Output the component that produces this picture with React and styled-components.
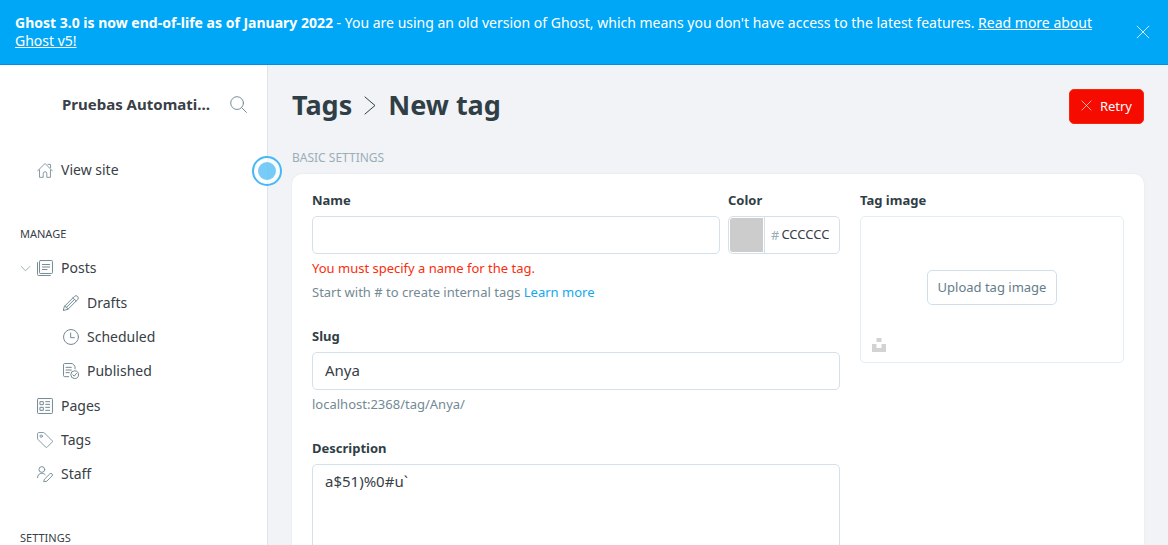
import React from "react";
import styled, { createGlobalStyle } from "styled-components";

const GlobalStyle = createGlobalStyle`
  *, *::before, *::after { box-sizing: border-box; }
  body {
    margin: 0;
    color: #394047;
    background: #f1f3f7;
    font-family: "Noto Sans", "Open Sans", sans-serif;
    font-size: 14px;
  }
  button, input, textarea { font-family: inherit; }
`;

const Shell = styled.div`
  display: flex;
  flex-direction: column;
  height: 100vh;
  overflow: hidden;
`;

const Banner = styled.aside`
  display: flex;
  align-items: center;
  justify-content: space-between;
  gap: 40px;
  flex: none;
  padding: 14px 18px 14px 15px;
  border-bottom: 1px solid #008ce8;
  background: #00a7f7;
  color: #fff;
`;

const BannerText = styled.p`
  margin: 0;
  font-size: 14px;
  line-height: 18px;
`;

const BannerLink = styled.a`
  color: inherit;
  text-decoration: underline;
`;

const IconButton = styled.button`
  display: flex;
  flex: none;
  padding: 0;
  border: 0;
  background: none;
  color: ${(p) => p.$color};
  cursor: pointer;
`;

const Body = styled.div`
  display: flex;
  flex: 1;
  min-height: 0;
`;

const Sidebar = styled.nav`
  position: relative;
  flex: none;
  width: 268px;
  border-right: 1px solid #dfe3ec;
  background: #fff;
`;

const SidebarInner = styled.div`
  height: 100%;
  overflow: hidden;
`;

const SiteHeader = styled.div`
  display: flex;
  align-items: center;
  gap: 16px;
  height: 38px;
  margin: 20px 20px 30px 62px;
`;

const SiteName = styled.div`
  flex: 1;
  min-width: 0;
  overflow: hidden;
  font-size: 15px;
  font-weight: 700;
  line-height: 20px;
  text-overflow: ellipsis;
  white-space: nowrap;
`;

const SectionTitle = styled.h4`
  margin: 38px 0 8px;
  padding: 0 20px;
  color: #394047;
  font-size: 11px;
  font-weight: 400;
  line-height: 18px;
  text-transform: uppercase;
`;

const NavList = styled.ul`
  margin: 0;
  padding: ${(p) => (p.$nested ? "1px 0" : "0")};
  list-style: none;
`;

const NavLink = styled.a`
  display: flex;
  align-items: center;
  gap: ${(p) => (p.$expandable ? "6px" : "8px")};
  height: 34px;
  padding-left: ${(p) => (p.$nested ? "63px" : p.$expandable ? "20px" : "37px")};
  color: #394047;
  font-size: 14px;
  line-height: 18px;
  text-decoration: none;
  svg { color: #738a94; }
`;

const NavText = styled.span`
  margin-left: ${(p) => (p.$expandable ? "2px" : "0")};
`;

const Beacon = styled.button`
  position: absolute;
  top: 91px;
  right: -15px;
  display: flex;
  align-items: center;
  justify-content: center;
  width: 30px;
  height: 30px;
  padding: 0;
  border: 2px solid #45b9f6;
  border-radius: 50%;
  background: rgba(255, 255, 255, 0.6);
  &::after {
    content: "";
    width: 18px;
    height: 18px;
    border-radius: 50%;
    background: rgba(62, 183, 243, 0.7);
  }
`;

const Main = styled.main`
  flex: 1;
  min-width: 0;
  padding: 24px 24px 0;
  overflow: hidden;
`;

const PageHeader = styled.header`
  display: flex;
  align-items: flex-start;
  justify-content: space-between;
`;

const PageTitle = styled.h2`
  display: flex;
  align-items: baseline;
  gap: 11px;
  margin: 0;
  color: #303e45;
  font-size: 27px;
  font-weight: 700;
  line-height: 32px;
`;

const TitleLink = styled.a`
  color: inherit;
  text-decoration: none;
`;

const Button = styled.button`
  display: flex;
  align-items: center;
  gap: 8px;
  height: 35px;
  padding: 0 ${(p) => (p.$danger ? "11px" : "10px")} 2px;
  border: 1px solid ${(p) => (p.$danger ? "#f5280c" : "#cfdfe8")};
  border-radius: 5px;
  background: ${(p) => (p.$danger ? "#f50b00" : "#fff")};
  color: ${(p) => (p.$danger ? "#fff" : "#647d89")};
  font-size: 13px;
  line-height: 18px;
  white-space: nowrap;
  cursor: pointer;
`;

const FormSection = styled.section`
  margin-top: 26px;
`;

const FormHeading = styled.h3`
  margin: 0 0 8px;
  color: #9baeb8;
  font-size: 12px;
  font-weight: 400;
  line-height: 16px;
  text-transform: uppercase;
`;

const Card = styled.div`
  display: grid;
  grid-template-columns: 2fr 1fr;
  gap: 20px;
  padding: 20px;
  border-radius: 10px;
  background: #fff;
  box-shadow: 0 0 2px rgba(0, 0, 0, 0.08);
`;

const Fields = styled.div`
  display: flex;
  flex-direction: column;
  gap: 28px;
`;

const NameRow = styled.div`
  display: grid;
  grid-template-columns: 1fr 112px;
  gap: 8px;
`;

const Label = styled.label`
  display: block;
  margin-bottom: 10px;
  color: #303e45;
  font-size: 13px;
  font-weight: 700;
  line-height: 12px;
`;

const Input = styled.input`
  display: block;
  width: 100%;
  height: 38px;
  padding: 0 12px 2px;
  border: 1px solid #d2e1eb;
  border-radius: 5px;
  outline: 0;
  background: #fff;
  color: #394047;
  font-size: 15px;
`;

const TextArea = styled.textarea`
  display: block;
  width: 100%;
  height: 108px;
  padding: 6px 12px;
  border: 1px solid #d2e1eb;
  border-radius: 5px;
  outline: 0;
  color: #394047;
  font-size: 15px;
  line-height: 20px;
  resize: none;
`;

const Note = styled.p`
  margin: 5px 0 0;
  color: ${(p) => (p.$error ? "#fa2d0c" : "#738a94")};
  font-size: 13px;
  line-height: 19px;
`;

const NoteLink = styled.a`
  color: #14a8f0;
  text-decoration: none;
`;

const ColorBox = styled.div`
  display: flex;
  align-items: center;
  height: 38px;
  padding: 1px;
  border: 1px solid #d2e1eb;
  border-radius: 5px;
`;

const Swatch = styled.input`
  flex: none;
  width: 35px;
  height: 36px;
  padding: 0;
  border: 0;
  border-right: 1px solid #d2e1eb;
  background: none;
  appearance: none;
  &::-webkit-color-swatch-wrapper { padding: 1px 1px 1px 0; }
  &::-webkit-color-swatch { border: 0; border-radius: 3px 0 0 3px; }
`;

const Hash = styled.span`
  margin-left: 6px;
  color: #9baeb8;
  font-size: 13px;
`;

const HexInput = styled.input`
  flex: 1;
  min-width: 0;
  padding: 0 0 2px 2px;
  border: 0;
  outline: 0;
  color: #394047;
  font-size: 13px;
`;

const Uploader = styled.div`
  position: relative;
  display: flex;
  align-items: center;
  justify-content: center;
  height: 147px;
  padding-bottom: 4px;
  border: 1px solid #e0eef6;
  border-radius: 5px;
`;

const UnsplashButton = styled(IconButton)`
  position: absolute;
  bottom: 10px;
  left: 11px;
`;

const Svg = ({ size = 16, weight = 1.5, children }) => (
  <svg
    width={size}
    height={size}
    viewBox="0 0 24 24"
    fill="none"
    stroke="currentColor"
    strokeWidth={weight}
    strokeLinecap="round"
    strokeLinejoin="round"
    aria-hidden="true"
  >
    {children}
  </svg>
);

const CloseIcon = ({ size }) => (
  <Svg size={size} weight={1.4}><path d="M2 2l20 20M22 2L2 22" /></Svg>
);
const SearchIcon = () => (
  <Svg size={17} weight={1.4}><circle cx="10" cy="10" r="9" /><path d="M16.5 16.5L23.2 23.2" /></Svg>
);
const HomeIcon = () => (
  <Svg weight={1.3}>
    <path d="M.8 13.5L12 2.200l11.200 11.300M3.800 12v11h5.500v-5.700a2.700 2.700 0 0 1 5.400 0V23h5.500V12M16.500 3.500h3.800v5" />
  </Svg>
);
const PostsIcon = () => (
  <Svg>
    <rect x="3.800" y=".8" width="19.400" height="19.400" rx="1.2" />
    <path d="M.8 3.800v17.900c0 1 .6 1.500 1.500 1.500H20M8 6.800h11M8 10.500h11M8 14.300h7" />
  </Svg>
);
const DraftsIcon = () => (
  <Svg>
    <path d="M2.6 16.6L17.2 2a3.4 3.4 0 0 1 4.8 4.8L7.4 21.4L.8 23.2zM15 4.2L19.8 9M2.6 16.6l1.8.6.6 1.8 1.8.6.6 1.8M17.2 6.6L5 18.8" />
  </Svg>
);
const ClockIcon = () => (
  <Svg><circle cx="12" cy="12" r="11.2" /><path d="M11.5 6v7H17" /></Svg>
);
const PublishedIcon = () => (
  <Svg>
    <path d="M8.5 20.5h-6C1.500 20.5.8 20 .8 19V2.300C.8 1.500 1.500.8 2.500.8H14l4 4v4M4.500 6.500h8M4.500 10.500h8M4.500 14.500h5" />
    <circle cx="17.500" cy="17.500" r="5.800" />
    <path d="M14.800 17.800l2 2 3.500-4.300" />
  </Svg>
);
const PagesIcon = () => (
  <Svg>
    <rect x=".8" y=".8" width="22.4" height="22.4" rx="1.2" />
    <path d="M5 5.500h4.500V10H5zM5 14h4.500v4.500H5zM13 5.500h6M13 9.500h6M13 14h6M13 18.500h6" />
  </Svg>
);
const TagIcon = () => (
  <Svg weight={1.3}>
    <path d="M.8 2.500C.8 1.500 1.500.8 2.500.8h7.200c.6 0 1 .2 1.400.6l11.700 11.700c.6.6.6 1.400 0 2l-7.700 7.700c-.6.6-1.400.6-2 0L1.400 11.100C1 10.700.8 10.300.8 9.700z" />
    <circle cx="6.300" cy="6.300" r="1.800" />
  </Svg>
);
const StaffIcon = () => (
  <Svg weight={1.4}>
    <circle cx="7.300" cy="5.200" r="4.300" />
    <path d="M.8 17.500c0-4 2.700-6.500 6.500-6.500 2 0 3.800.7 5 2M11.500 19.500l7.700-7.700a2.300 2.300 0 0 1 3.300 3.300l-7.700 7.700-4.200.9z" />
  </Svg>
);
const ExpandIcon = () => (
  <Svg size={11} weight={1.5}><path d="M2.500 7.500L12 17 21.500 7.500" /></Svg>
);
const TitleChevron = () => (
  <svg width="14" height="19" viewBox="0 0 14 19" fill="none" stroke="currentColor" aria-hidden="true">
    <path d="M2 1l10 8.500L2 18" strokeLinecap="round" strokeLinejoin="round" />
  </svg>
);
const UnsplashIcon = () => (
  <svg width="14" height="14" viewBox="0 0 14 14" fill="currentColor" aria-hidden="true">
    <path d="M4.500 0h5v4h-5zM0 6h4.500v4h5V6H14v8H0z" />
  </svg>
);

const NavItem = ({ icon: Icon, label, nested, expandable, children }) => (
  <li>
    <NavLink href="#" $nested={nested} $expandable={expandable}>
      {expandable && <ExpandIcon />}
      <Icon />
      <NavText $expandable={expandable}>{label}</NavText>
    </NavLink>
    {children}
  </li>
);

export default function App() {
  return (
    <>
      <GlobalStyle />
      <Shell>
        <Banner>
          <BannerText>
            <strong>Ghost 3.0 is now end-of-life as of January 2022</strong> - You are using an old
            version of Ghost, which means you don't have access to the latest features.{" "}
            <BannerLink href="#">Read more about Ghost v5!</BannerLink>
          </BannerText>
          <IconButton $color="#fff" aria-label="Close"><CloseIcon size={14} /></IconButton>
        </Banner>
        <Body>
          <Sidebar>
            <SidebarInner>
              <SiteHeader>
                <SiteName>Pruebas Automatizadas</SiteName>
                <IconButton $color="#738a94" aria-label="Search"><SearchIcon /></IconButton>
              </SiteHeader>
              <NavList>
                <NavItem icon={HomeIcon} label="View site" />
              </NavList>
              <SectionTitle>Manage</SectionTitle>
              <NavList>
                <NavItem icon={PostsIcon} label="Posts" expandable>
                  <NavList $nested>
                    <NavItem icon={DraftsIcon} label="Drafts" nested />
                    <NavItem icon={ClockIcon} label="Scheduled" nested />
                    <NavItem icon={PublishedIcon} label="Published" nested />
                  </NavList>
                </NavItem>
                <NavItem icon={PagesIcon} label="Pages" />
                <NavItem icon={TagIcon} label="Tags" />
                <NavItem icon={StaffIcon} label="Staff" />
              </NavList>
              <SectionTitle>Settings</SectionTitle>
            </SidebarInner>
            <Beacon aria-label="Show tip" />
          </Sidebar>
          <Main>
            <PageHeader>
              <PageTitle>
                <TitleLink href="#">Tags</TitleLink>
                <TitleChevron />
                New tag
              </PageTitle>
              <Button $danger><CloseIcon size={11} />Retry</Button>
            </PageHeader>
            <FormSection>
              <FormHeading>Basic settings</FormHeading>
              <Card>
                <Fields>
                  <div>
                    <NameRow>
                      <div>
                        <Label htmlFor="tag-name">Name</Label>
                        <Input id="tag-name" type="text" />
                      </div>
                      <div>
                        <Label htmlFor="tag-color">Color</Label>
                        <ColorBox>
                          <Swatch type="color" defaultValue="#cccccc" aria-label="Pick a color" />
                          <Hash>#</Hash>
                          <HexInput id="tag-color" type="text" defaultValue="CCCCCC" />
                        </ColorBox>
                      </div>
                    </NameRow>
                    <Note $error>You must specify a name for the tag.</Note>
                    <Note>
                      Start with # to create internal tags <NoteLink href="#">Learn more</NoteLink>
                    </Note>
                  </div>
                  <div>
                    <Label htmlFor="tag-slug">Slug</Label>
                    <Input id="tag-slug" type="text" defaultValue="Anya" />
                    <Note>localhost:2368/tag/Anya/</Note>
                  </div>
                  <div>
                    <Label htmlFor="tag-description">Description</Label>
                    <TextArea id="tag-description" defaultValue="a$51)%0#u`" />
                  </div>
                </Fields>
                <div>
                  <Label as="div">Tag image</Label>
                  <Uploader>
                    <Button>Upload tag image</Button>
                    <UnsplashButton $color="#d3d3d3" aria-label="Choose from Unsplash">
                      <UnsplashIcon />
                    </UnsplashButton>
                  </Uploader>
                </div>
              </Card>
            </FormSection>
          </Main>
        </Body>
      </Shell>
    </>
  );
}
